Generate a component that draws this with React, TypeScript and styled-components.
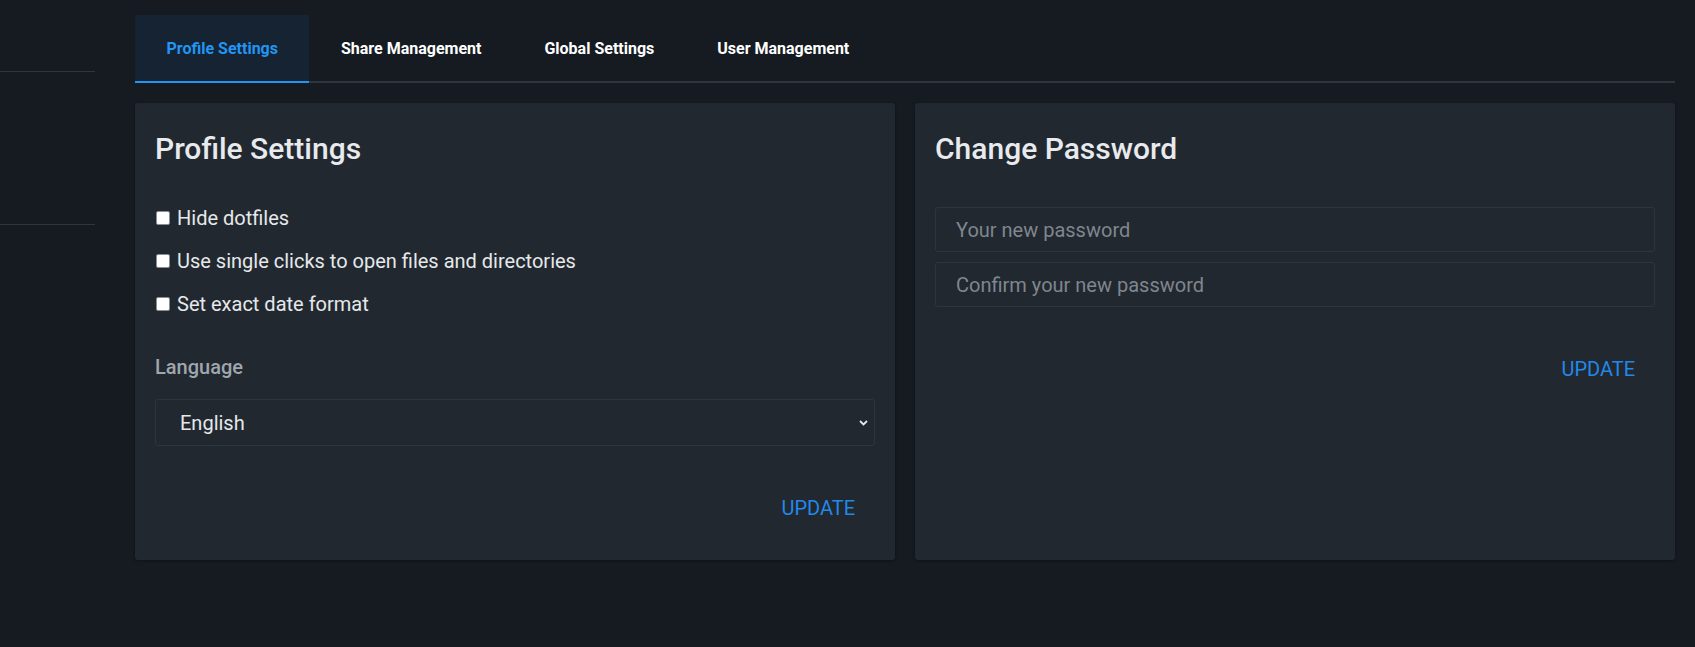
import React from "react";
import styled, { createGlobalStyle } from "styled-components";

const GlobalStyle = createGlobalStyle`
  html, body {
    margin: 0;
    padding: 0;
    background: #161b22;
    font-family: Roboto, "Liberation Sans", sans-serif;
    color: #e6e8ea;
  }
  * { box-sizing: border-box; }
`;

const Layout = styled.div`
  display: flex;
  min-height: 647px;
  background: #161b22;
`;

const Sidebar = styled.aside`
  width: 95px;
  flex-shrink: 0;
  padding-top: 71px;
  display: flex;
  flex-direction: column;
`;

const SidebarDivider = styled.div<{ $gap: number }>`
  height: 1px;
  background: #30363d;
  margin-bottom: ${(p) => p.$gap}px;
`;

const Main = styled.main`
  flex: 1;
  padding: 15px 20px 0 40px;
`;

const TabBar = styled.nav`
  display: flex;
  border-bottom: 2px solid #30363d;
`;

const Tab = styled.button<{ $active?: boolean }>`
  height: 68px;
  margin-bottom: -2px;
  padding: 0 31.5px;
  border: none;
  border-bottom: 2px solid ${(p) => (p.$active ? "#2196f3" : "transparent")};
  background: ${(p) => (p.$active ? "#152332" : "transparent")};
  color: ${(p) => (p.$active ? "#2196f3" : "#ffffff")};
  font-family: Roboto, "Liberation Sans", sans-serif;
  font-size: 16px;
  font-weight: 700;
  cursor: pointer;
`;

const Cards = styled.div`
  display: grid;
  grid-template-columns: 1fr 1fr;
  gap: 20px;
  margin-top: 20px;
`;

const Card = styled.section`
  background: #212830;
  border-radius: 3px;
  box-shadow: 0 1px 3px rgba(0, 0, 0, 0.35);
  padding: 28px 20px 34px;
  display: flex;
  flex-direction: column;
`;

const CardTitle = styled.h2`
  margin: 0;
  font-size: 30px;
  line-height: 36px;
  font-weight: 500;
  color: #e8eaed;
`;

const CardBody = styled.div<{ $top: number }>`
  padding-top: ${(p) => p.$top}px;
  display: flex;
  flex-direction: column;
`;

const CheckRow = styled.label`
  display: flex;
  align-items: center;
  height: 43px;
  font-size: 20px;
  color: #e6e8ea;
  cursor: pointer;
`;

const Checkbox = styled.input.attrs({ type: "checkbox" })`
  appearance: none;
  width: 14px;
  height: 14px;
  margin: 0 7px 0 1px;
  background: #ffffff;
  border: 1px solid #8a8f95;
  border-radius: 2px;
  flex-shrink: 0;
`;

const FieldLabel = styled.div`
  margin-top: 30px;
  font-size: 20px;
  line-height: 24px;
  font-weight: 500;
  color: #a0a6ad;
`;

const SelectWrap = styled.div`
  position: relative;
  margin-top: 20px;
`;

const Select = styled.select`
  appearance: none;
  width: 100%;
  height: 47px;
  padding: 0 24px;
  background: #212830;
  border: 1px solid #2e353e;
  border-radius: 3px;
  color: #e6e8ea;
  font-family: Roboto, "Liberation Sans", sans-serif;
  font-size: 20px;
  outline: none;
`;

const Chevron = styled.svg`
  position: absolute;
  right: 7px;
  top: 50%;
  width: 9px;
  height: 6px;
  margin-top: -3px;
  pointer-events: none;
`;

const Input = styled.input`
  height: 45px;
  width: 100%;
  padding: 0 20px;
  background: #212830;
  border: 1px solid #2e353e;
  border-radius: 3px;
  color: #e6e8ea;
  font-family: Roboto, "Liberation Sans", sans-serif;
  font-size: 20px;
  outline: none;
  & + & {
    margin-top: 10px;
  }
  &::placeholder {
    color: #80868d;
  }
`;

const Actions = styled.div`
  display: flex;
  justify-content: flex-end;
  margin-top: 44px;
`;

const FlatButton = styled.button`
  height: 36px;
  padding: 0 20px;
  background: transparent;
  border: none;
  color: #2189ea;
  font-family: Roboto, "Liberation Sans", sans-serif;
  font-size: 20px;
  text-transform: uppercase;
  cursor: pointer;
`;

const tabs = ["Profile Settings", "Share Management", "Global Settings", "User Management"];

export default function App() {
  return (
    <>
      <GlobalStyle />
      <Layout>
        <Sidebar>
          <SidebarDivider $gap={152} />
          <SidebarDivider $gap={0} />
        </Sidebar>
        <Main>
          <TabBar>
            {tabs.map((t, i) => (
              <Tab key={t} $active={i === 0}>
                {t}
              </Tab>
            ))}
          </TabBar>
          <Cards>
            <Card>
              <CardTitle>Profile Settings</CardTitle>
              <CardBody $top={29}>
                <CheckRow>
                  <Checkbox />
                  Hide dotfiles
                </CheckRow>
                <CheckRow>
                  <Checkbox />
                  Use single clicks to open files and directories
                </CheckRow>
                <CheckRow>
                  <Checkbox />
                  Set exact date format
                </CheckRow>
                <FieldLabel>Language</FieldLabel>
                <SelectWrap>
                  <Select defaultValue="en">
                    <option value="en">English</option>
                  </Select>
                  <Chevron viewBox="0 0 9 6">
                    <path d="M1 1l3.5 3.5L8 1" fill="none" stroke="#e6e8ea" strokeWidth="1.8" />
                  </Chevron>
                </SelectWrap>
              </CardBody>
              <Actions>
                <FlatButton>Update</FlatButton>
              </Actions>
            </Card>
            <Card>
              <CardTitle>Change Password</CardTitle>
              <CardBody $top={40}>
                <Input type="password" placeholder="Your new password" />
                <Input type="password" placeholder="Confirm your new password" />
              </CardBody>
              <Actions>
                <FlatButton>Update</FlatButton>
              </Actions>
            </Card>
          </Cards>
        </Main>
      </Layout>
    </>
  );
}
